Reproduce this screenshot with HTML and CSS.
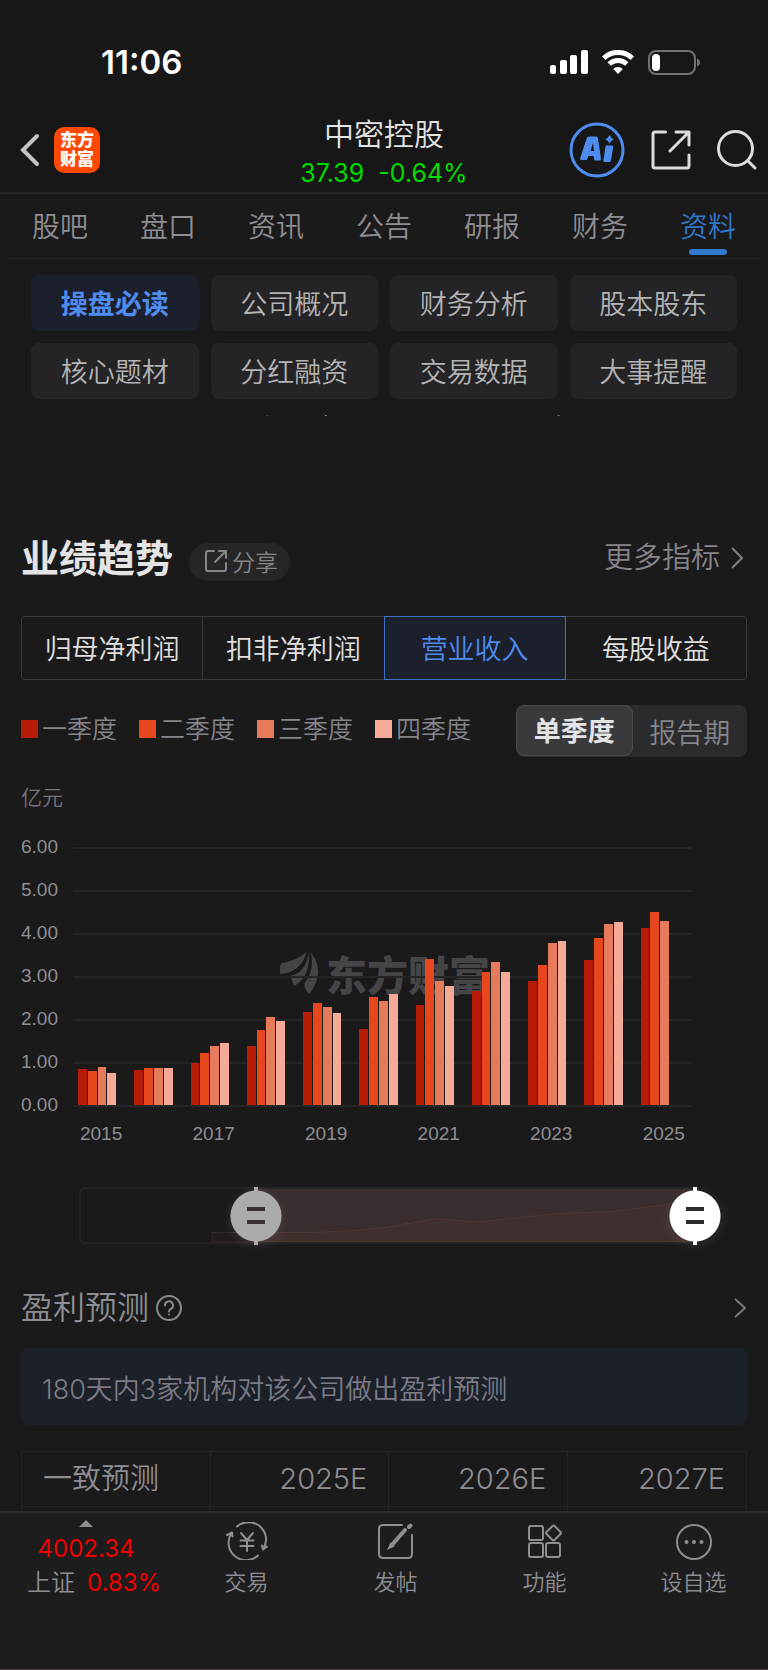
FILE: index.html
```html
<!DOCTYPE html>
<html lang="zh-CN">
<head>
    <meta charset="UTF-8">
    <meta name="viewport" content="width=device-width, initial-scale=1">
    <title>中密控股 - 资料</title>
    <link rel="stylesheet" href="styles.css">
</head>
<body>
    <header class="header">
        <div class="status-bar">
            <span class="time">11:06</span>
            <div class="status-icons">
                <svg width="38" height="24" viewBox="0 0 38 24" fill="#fff">
                    <rect x="0" y="15" width="6" height="9" rx="2"/>
                    <rect x="10" y="10" width="7" height="14" rx="2"/>
                    <rect x="20" y="5" width="7" height="19" rx="2"/>
                    <rect x="31" y="0" width="7" height="24" rx="2"/>
                </svg>
                <svg width="32" height="24" viewBox="0 0 32 24" fill="none" stroke="#fff" stroke-width="5">
                    <path d="M1.8 8.2A20.4 20.4 0 0 1 30.2 8.2"/>
                    <path d="M7.2 14A12.6 12.6 0 0 1 24.8 14"/>
                    <path d="M16 24l-4.8-5a7 7 0 0 1 9.6 0z" fill="#fff" stroke="none"/>
                </svg>
                <svg width="53" height="25" viewBox="0 0 53 25">
                    <rect x="1" y="1" width="46" height="23" rx="7" fill="none" stroke="#727272" stroke-width="2"/>
                    <rect x="4" y="4" width="8" height="17" rx="4" fill="#fff"/>
                    <path d="M49 8.500c4 1.500 4 6.500 0 8z" fill="#727272"/>
                </svg>
            </div>
        </div>
        <div class="nav">
            <div class="nav-left">
                <button type="button" class="icon-btn" aria-label="返回">
                    <svg width="20" height="34" viewBox="0 0 20 34" fill="none" stroke="#c4c4c4" stroke-width="4" stroke-linecap="round">
                        <path d="M17 3L3 17l14 14"/>
                    </svg>
                </button>
                <a href="#" class="brand"><span>东方</span><span>财富</span></a>
            </div>
            <div class="nav-title">
                <h1>中密控股</h1>
                <p class="price"><span>37.39</span><span>-0.64%</span></p>
            </div>
            <div class="nav-right">
                <button type="button" class="icon-btn" aria-label="AI">
                    <svg width="56" height="56" viewBox="0 0 56 56" fill="#4e8cf0">
                        <circle cx="28" cy="28" r="26" fill="none" stroke="#4e8cf0" stroke-width="3"/>
                        <path d="M18 15.500q1-1 3-1h6q1.600 0 2 2l3 20.500q0 1.500-1.500 1.500h-5l-1-4.500h-5l-1.700 4h-5.500q-1.800 0-1.100-2zM24 21l-2.500 8h3.600z" fill-rule="evenodd"/>
                        <path d="M37.500 23.500h5.500q1.500 0 1.200 1.500l-2.200 13.500q-.3 1.500-2 1.500h-4.500q-1.400 0-1.100-1.500l2-13.500q.2-1.500 1.100-1.500z"/>
                        <path d="M40.500 13q1 3 4.500 4.300-3.500 1.200-4.500 4.500-1-3.300-4.500-4.500 3.500-1.300 4.500-4.300z"/>
                    </svg>
                </button>
                <button type="button" class="icon-btn" aria-label="分享">
                    <svg width="40" height="40" viewBox="0 0 40 40" fill="none" stroke="#dcdcdc" stroke-width="3" stroke-linecap="round" stroke-linejoin="round">
                        <path d="M14.500 2H4Q2 2 2 4v32q0 2 2 2h32q2 0 2-2V25M25 2h13v13M38 2L19 21"/>
                    </svg>
                </button>
                <button type="button" class="icon-btn" aria-label="搜索">
                    <svg width="40" height="40" viewBox="0 0 40 40" fill="none" stroke="#dcdcdc" stroke-width="3" stroke-linecap="round">
                        <circle cx="18.500" cy="18.500" r="17"/>
                        <path d="M31 31l7 7"/>
                    </svg>
                </button>
            </div>
        </div>
    </header>

    <nav class="tabs">
        <a href="#">股吧</a>
        <a href="#">盘口</a>
        <a href="#">资讯</a>
        <a href="#">公告</a>
        <a href="#">研报</a>
        <a href="#">财务</a>
        <a href="#" class="active">资料</a>
    </nav>

    <main>
        <div class="sub-tabs">
            <button type="button" class="active">操盘必读</button>
            <button type="button">公司概况</button>
            <button type="button">财务分析</button>
            <button type="button">股本股东</button>
            <button type="button">核心题材</button>
            <button type="button">分红融资</button>
            <button type="button">交易数据</button>
            <button type="button">大事提醒</button>
        </div>

        <!-- Bottom edge of the row scrolled under the tabs -->
        <svg class="scroll-edge" height="2" aria-hidden="true">
            <rect x="34.700%" width="2" height="1" fill="#444"/>
            <rect x="42.300%" width="2" height="1" fill="#888"/>
            <rect x="72.600%" width="2" height="1" fill="#777"/>
        </svg>

        <section class="trend">
            <div class="section-head">
                <h2>业绩趋势</h2>
                <button type="button" class="share-btn">
                    <svg width="22" height="22" viewBox="0 0 22 22" fill="none" stroke="#85858a" stroke-width="2" stroke-linecap="round" stroke-linejoin="round">
                        <path d="M9 1H3Q1 1 1 3v16q0 2 2 2h16q2 0 2-2v-6M14 1h7v7M21 1L10 12"/>
                    </svg>
                    分享
                </button>
                <a href="#" class="more">
                    更多指标
                    <svg width="12" height="22" viewBox="0 0 12 22" fill="none" stroke="#7d7d82" stroke-width="2">
                        <path d="M1 1l10 10L1 21"/>
                    </svg>
                </a>
            </div>

            <div class="segments">
                <button type="button">归母净利润</button>
                <button type="button">扣非净利润</button>
                <button type="button" class="active">营业收入</button>
                <button type="button">每股收益</button>
            </div>

            <div class="legend-row">
                <ul class="legend">
                    <li><i class="q1"></i>一季度</li>
                    <li><i class="q2"></i>二季度</li>
                    <li><i class="q3"></i>三季度</li>
                    <li><i class="q4"></i>四季度</li>
                </ul>
                <div class="toggle">
                    <button type="button" class="active">单季度</button>
                    <button type="button">报告期</button>
                </div>
            </div>

            <p class="unit">亿元</p>

            <div class="chart">
                <div class="y-axis">
                    <span>6.00</span><span>5.00</span><span>4.00</span><span>3.00</span><span>2.00</span><span>1.00</span><span>0.00</span>
                </div>
                <div class="plot">
                    <div class="watermark">
                        <svg width="40" height="44" viewBox="0 0 40 44" fill="#454548">
                            <path d="M27 1Q17 10 2 12Q-1 16 1 23Q22 21 27 1z"/>
                            <path d="M29 1Q27 21 11 25Q13 32 15 35Q32 24 29 1z"/>
                            <path d="M31 1Q36 19 25 32Q24 37 30 43Q47 20 31 1z"/>
                        </svg>
                        东方财富
                    </div>
                    <div class="gridlines"></div>
                    <div class="bars">
                        <div class="group"><i class="q1" style="height:14.1%"></i><i class="q2" style="height:13.3%"></i><i class="q3" style="height:14.6%"></i><i class="q4" style="height:12.6%"></i></div>
                        <div class="group"><i class="q1" style="height:13.6%"></i><i class="q2" style="height:14.2%"></i><i class="q3" style="height:14.3%"></i><i class="q4" style="height:14.2%"></i></div>
                        <div class="group"><i class="q1" style="height:16.3%"></i><i class="q2" style="height:20%"></i><i class="q3" style="height:23%"></i><i class="q4" style="height:23.9%"></i></div>
                        <div class="group"><i class="q1" style="height:22.7%"></i><i class="q2" style="height:28.9%"></i><i class="q3" style="height:34%"></i><i class="q4" style="height:32.4%"></i></div>
                        <div class="group"><i class="q1" style="height:35.9%"></i><i class="q2" style="height:39.4%"></i><i class="q3" style="height:38.1%"></i><i class="q4" style="height:35.5%"></i></div>
                        <div class="group"><i class="q1" style="height:29.6%"></i><i class="q2" style="height:41.7%"></i><i class="q3" style="height:40.4%"></i><i class="q4" style="height:42.9%"></i></div>
                        <div class="group"><i class="q1" style="height:38.6%"></i><i class="q2" style="height:56.6%"></i><i class="q3" style="height:48.2%"></i><i class="q4" style="height:46%"></i></div>
                        <div class="group"><i class="q1" style="height:44.3%"></i><i class="q2" style="height:51.5%"></i><i class="q3" style="height:55.4%"></i><i class="q4" style="height:51.7%"></i></div>
                        <div class="group"><i class="q1" style="height:48.1%"></i><i class="q2" style="height:54.4%"></i><i class="q3" style="height:62.9%"></i><i class="q4" style="height:63.6%"></i></div>
                        <div class="group"><i class="q1" style="height:56.2%"></i><i class="q2" style="height:64.8%"></i><i class="q3" style="height:70%"></i><i class="q4" style="height:70.8%"></i></div>
                        <div class="group"><i class="q1" style="height:68.5%"></i><i class="q2" style="height:74.7%"></i><i class="q3" style="height:71.2%"></i><i></i></div>
                    </div>
                </div>
                <div class="x-axis">
                    <span>2015</span><span></span><span>2017</span><span></span><span>2019</span><span></span><span>2021</span><span></span><span>2023</span><span></span><span>2025</span>
                </div>
            </div>

            <div class="range">
                <div class="range-track">
                    <div class="range-selected"></div>
                    <svg class="range-line" viewBox="0 0 616 56" preserveAspectRatio="none">
                        <path d="M132 56V46H231Q270 45 305 41L353 32Q360 31 368 32L398 35L441 30L481 26L531 24L571 19L616 12V56z" fill="#e07050" fill-opacity=".04" stroke="#8a5a45" stroke-opacity=".25"/>
                    </svg>
                </div>
                <input type="range" class="range-start" min="0" max="1000" value="287" aria-label="开始时间">
                <input type="range" class="range-end" min="0" max="1000" value="1000" aria-label="结束时间">
            </div>
        </section>

        <section class="forecast">
            <div class="forecast-head">
                <h3>盈利预测</h3>
                <button type="button" class="icon-btn" aria-label="说明">
                    <svg width="26" height="26" viewBox="0 0 26 26" fill="none" stroke="#8a8a8f" stroke-width="2" stroke-linecap="round">
                        <circle cx="13" cy="13" r="12"/>
                        <path d="M9 10.500a4 4 0 1 1 5.800 3.400q-1.800 1-1.800 2.600"/>
                        <path d="M13 19.500v.1"/>
                    </svg>
                </button>
                <a href="#" class="arrow" aria-label="更多">
                    <svg width="12" height="20" viewBox="0 0 12 20" fill="none" stroke="#77777b" stroke-width="2">
                        <path d="M1 1l10 9-10 9"/>
                    </svg>
                </a>
            </div>
            <p class="note">180天内3家机构对该公司做出盈利预测</p>
            <table class="forecast-table">
                <thead>
                    <tr><th>一致预测</th><th>2025E</th><th>2026E</th><th>2027E</th></tr>
                </thead>
                <tbody>
                    <tr><td></td><td></td><td></td><td></td></tr>
                </tbody>
            </table>
        </section>
    </main>

    <footer class="bottom-bar">
        <a href="#" class="index">
            <svg width="14" height="7" viewBox="0 0 14 7" fill="#8e8e93"><path d="M7 0l7 7H0z"/></svg>
            <span class="up">4002.34</span>
            <span class="index-change">上证 <span class="up">0.83%</span></span>
        </a>
        <a href="#">
            <svg width="42" height="38" viewBox="0 0 42 38" fill="none" stroke="#8e8e93" stroke-width="2" stroke-linecap="round" stroke-linejoin="round">
                <path d="M11 4.500A17.500 17.500 0 0 1 37 27.500M37 27.500l-1-4M37 27.500l4-3"/>
                <path d="M32 33.500A17.500 17.500 0 0 1 5.500 11M1 13l5-2.500.500 4"/>
                <path d="M15 11l6 7 6-7M14.500 18.500h13M14.500 24h13M21 18v11"/>
            </svg>
            交易
        </a>
        <a href="#">
            <svg width="36" height="38" viewBox="0 0 36 38" fill="none" stroke="#8e8e93" stroke-width="2" stroke-linecap="round">
                <path d="M24 3H5Q1 3 1 7v25q0 4 4 4h25q4 0 4-4V13"/>
                <path d="M13 24l14-16" stroke-width="4"/>
                <path d="M31 5l1.500-1.500" stroke-width="4"/>
                <path d="M11 26l2-4 2 2z" fill="#8e8e93"/>
            </svg>
            发帖
        </a>
        <a href="#">
            <svg width="36" height="38" viewBox="0 0 36 38" fill="none" stroke="#8e8e93" stroke-width="2" stroke-linejoin="round">
                <rect x="2" y="4" width="14" height="14" rx="2"/>
                <rect x="2" y="21" width="14" height="14" rx="2"/>
                <rect x="19" y="21" width="14" height="14" rx="2"/>
                <path d="M25.500 4q1-1 2 0l6 6q1 1 0 2l-6 6q-1 1-2 0l-6-6q-1-1 0-2z"/>
            </svg>
            功能
        </a>
        <a href="#">
            <svg width="36" height="38" viewBox="0 0 36 38" fill="none" stroke="#8e8e93" stroke-width="2">
                <circle cx="18" cy="20" r="17"/>
                <g fill="#8e8e93" stroke="none"><circle cx="10.500" cy="20" r="2"/><circle cx="18" cy="20" r="2"/><circle cx="25.500" cy="20" r="2"/></g>
            </svg>
            设自选
        </a>
    </footer>
</body>
</html>
```

FILE: styles.css
```css
/* Global styles */
* {
    margin: 0;
    padding: 0;
    box-sizing: border-box;
}

body {
    font-family: Inter, 'Noto Sans CJK SC', sans-serif;
    font-size: 27px;
    font-weight: 350;
    background-color: #1a1a1b;
    color: #8e8e93;
    min-height: 100vh;
    display: flex;
    flex-direction: column;
}

a {
    color: inherit;
    text-decoration: none;
}

button {
    font: inherit;
    color: inherit;
    background: none;
    border: none;
    cursor: pointer;
}

svg {
    display: block;
    flex-shrink: 0;
}

ul {
    list-style: none;
}

main {
    flex: 1;
}

.icon-btn {
    display: flex;
}

/* Header */
.header {
    background-color: #171717;
    border-bottom: 2px solid #28282a;
}

.status-bar {
    height: 108px;
    padding: 16px 67px 0 101px;
    display: flex;
    justify-content: space-between;
    align-items: center;
}

.time {
    color: #fff;
    font-size: 33px;
    font-weight: 600;
}

.status-icons {
    display: flex;
    align-items: center;
    gap: 14px;
}

.nav {
    height: 84px;
    padding: 0 11px;
    display: grid;
    grid-template-columns: 1fr auto 1fr;
    align-items: center;
}

.nav-left,
.nav-right {
    display: flex;
    align-items: center;
}

.nav-left {
    padding-left: 9px;
    gap: 14px;
}

.nav-right {
    justify-content: flex-end;
    gap: 26px;
}

.brand {
    width: 46px;
    height: 46px;
    border-radius: 10px;
    background-color: #ff4800;
    color: #fff;
    font-size: 17px;
    font-weight: 900;
    line-height: 19px;
    display: flex;
    flex-direction: column;
    align-items: center;
    justify-content: center;
}

.nav-title {
    padding-top: 6px;
    text-align: center;
}

h1 {
    color: #e4e4e4;
    font-size: 30px;
    font-weight: 350;
    line-height: 40px;
}

.price {
    color: #00dc00;
    font-size: 25px;
    font-weight: 400;
    line-height: 38px;
    display: flex;
    justify-content: center;
    gap: 14px;
}

/* Tabs */
.tabs {
    margin: 0 6px;
    border-bottom: 1px solid #242422;
    display: flex;
}

.tabs a {
    flex: 1;
    height: 64px;
    font-size: 28px;
    line-height: 66px;
    text-align: center;
    position: relative;
}

.tabs .active {
    color: #2f78cc;
}

.tabs .active::after {
    content: '';
    position: absolute;
    left: 50%;
    bottom: 3px;
    width: 38px;
    height: 6px;
    margin-left: -19px;
    border-radius: 3px;
    background-color: #2f78cc;
}

.sub-tabs {
    padding: 16px 31px;
    display: grid;
    grid-template-columns: repeat(4, 1fr);
    gap: 12px;
}

.sub-tabs button {
    height: 56px;
    padding-bottom: 2px;
    border-radius: 8px;
    background-color: #242426;
    color: #b4b4b4;
}

.sub-tabs .active {
    background-color: #1c202d;
    color: #4e8cf0;
    font-weight: 700;
}

.scroll-edge {
    width: 100%;
}

/* Performance trend */
.trend,
.forecast {
    padding: 0 21px;
}

.trend {
    padding-top: 120px;
}

.section-head {
    display: flex;
    align-items: flex-start;
}

h2 {
    color: #e4e4e4;
    font-size: 38px;
    font-weight: 700;
    line-height: 42px;
}

.share-btn {
    height: 38px;
    margin: 6px 0 0 16px;
    padding: 0 12px 2px 16px;
    border-radius: 19px;
    background-color: #262626;
    color: #85858a;
    font-size: 23px;
    display: flex;
    align-items: center;
    gap: 5px;
}

.more {
    margin-left: auto;
    padding-right: 4px;
    font-size: 29px;
    line-height: 42px;
    color: #85858a;
    display: flex;
    align-items: center;
    gap: 11px;
}

.segments {
    margin-top: 35px;
    height: 64px;
    border: 1px solid #3a3a3c;
    border-radius: 4px;
    display: flex;
}

.segments button {
    flex: 1;
    padding-bottom: 2px;
    color: #e0e0e0;
    border-right: 1px solid #3a3a3c;
}

.segments button:last-child {
    border-right: none;
}

.segments .active {
    margin: -1px 0 -1px -1px;
    border: 1px solid #3f74c4;
    background-color: #1c202d;
    color: #4e8cf0;
}

.legend-row {
    margin-top: 25px;
    display: flex;
    justify-content: space-between;
    align-items: flex-start;
}

.legend {
    display: flex;
    gap: 22px;
    font-size: 25px;
    line-height: 48px;
    color: #85858a;
}

.legend li {
    display: flex;
    align-items: center;
    gap: 4px;
}

.legend i {
    width: 17px;
    height: 18px;
}

.q1 {
    background-color: #b81b06;
}

.q2 {
    background-color: #e6471c;
}

.q3 {
    background-color: #e67b5b;
}

.q4 {
    background-color: #f5aa97;
}

.toggle {
    width: 231px;
    height: 52px;
    border-radius: 8px;
    background-color: #2b2b2d;
    display: flex;
}

.toggle button {
    flex: 1;
    color: #85858a;
}

.toggle .active {
    height: 51px;
    padding-bottom: 2px;
    border: 1px solid #4a4a4c;
    border-radius: 8px;
    background-color: #3a3a3c;
    color: #e4e4e4;
    font-weight: 700;
}

.unit {
    margin-top: 26px;
    font-size: 21px;
    line-height: 30px;
    color: #77757f;
}

/* Chart */
.chart {
    margin: 34px 55px 0 0;
    display: grid;
    grid-template-columns: 52px 1fr;
    font-family: 'Liberation Sans', Arial, sans-serif;
    font-size: 19px;
    line-height: 20px;
}

.y-axis {
    margin: -10px 0 -8px;
    display: flex;
    flex-direction: column;
    justify-content: space-between;
}

.plot {
    height: 260px;
    position: relative;
}

.watermark {
    position: absolute;
    top: 104px;
    left: 50%;
    transform: translateX(-50%);
    margin-left: 2px;
    display: flex;
    align-items: center;
    gap: 7px;
    white-space: nowrap;
    font-family: 'Noto Sans CJK SC', sans-serif;
    font-size: 41px;
    font-weight: 900;
    line-height: 44px;
    color: #454548;
}

.gridlines {
    position: absolute;
    inset: 0;
    background: repeating-linear-gradient(#252527 0 2px, transparent 2px 43px);
}

.bars {
    position: relative;
    height: 258px;
    display: flex;
}

.group {
    flex: 1;
    padding: 0 13px 0 5px;
    display: flex;
    align-items: flex-end;
    gap: 1px;
}

.group i {
    flex: 1;
}

.x-axis {
    grid-column: 2;
    margin-top: 17px;
    display: flex;
}

.x-axis span {
    flex: 1;
    text-align: center;
}

/* Range slider */
.range {
    position: relative;
    height: 57px;
    margin: 43px 52px 0 58px;
}

.range-track {
    position: relative;
    height: 57px;
    border: 2px solid #242426;
    border-radius: 6px;
    overflow: hidden;
}

.range-selected {
    height: 100%;
    margin-left: 29%;
    background-color: #392d2d;
}

.range-line {
    position: absolute;
    inset: 0;
    width: 100%;
    height: 100%;
}

.range input {
    -webkit-appearance: none;
    appearance: none;
    position: absolute;
    top: 0;
    left: -26px;
    width: calc(100% + 52px);
    height: 58px;
    background: none;
    pointer-events: none;
}

.range input::-webkit-slider-thumb {
    -webkit-appearance: none;
    width: 52px;
    height: 58px;
    background:
        linear-gradient(var(--mark), var(--mark)) 17px 20px / 18px 4px no-repeat,
        linear-gradient(var(--mark), var(--mark)) 17px 33px / 18px 4px no-repeat,
        radial-gradient(circle, var(--thumb) 25px, transparent 26px),
        linear-gradient(var(--thumb), var(--thumb)) 24px 0 / 4px 58px no-repeat;
    filter: drop-shadow(0 2px 6px rgba(255, 255, 255, 0.1));
    pointer-events: auto;
    cursor: pointer;
}

.range-start {
    --thumb: #ababab;
    --mark: #3b302f;
}

.range-end {
    --thumb: #fff;
    --mark: #2c2c2c;
}

/* Forecast */
.forecast-head {
    margin-top: 46px;
    display: flex;
    align-items: center;
    gap: 7px;
}

h3 {
    font-size: 32px;
    font-weight: 350;
    line-height: 36px;
}

.arrow {
    margin-left: auto;
    padding-right: 1px;
}

.note {
    margin-top: 22px;
    padding: 6px 21px 0;
    border-radius: 8px;
    background-color: #1b2029;
    color: #7d7b86;
    line-height: 71px;
}

.forecast-table {
    width: 100%;
    margin-top: 26px;
    border-collapse: collapse;
    table-layout: fixed;
}

.forecast-table th,
.forecast-table td {
    border: 1px solid #252527;
    border-bottom: none;
}

.forecast-table th {
    padding: 0 21px;
    font-size: 29px;
    font-weight: 350;
    line-height: 54px;
    text-align: right;
}

.forecast-table th:first-child {
    width: 26%;
    text-align: left;
}

.forecast-table td {
    height: 4px;
}

/* Bottom bar */
.bottom-bar {
    height: 159px;
    border-top: 2px solid #2c2c2c;
    border-bottom: 1px solid #4a4647;
    background-color: #1d1d1d;
    display: flex;
}

.bottom-bar a {
    flex: 1;
    padding-top: 9px;
    font-size: 22px;
    line-height: 40px;
    display: flex;
    flex-direction: column;
    align-items: center;
    gap: 2px;
}

.bottom-bar .index {
    flex: none;
    width: 172px;
    padding-top: 7px;
    font-size: 24px;
    line-height: 34px;
    gap: 0;
}

.bottom-bar .index svg {
    margin-bottom: 5px;
}

.index-change {
    padding-left: 16px;
    display: flex;
    gap: 12px;
}

.up {
    color: #f00000;
    font-weight: 400;
}
```
